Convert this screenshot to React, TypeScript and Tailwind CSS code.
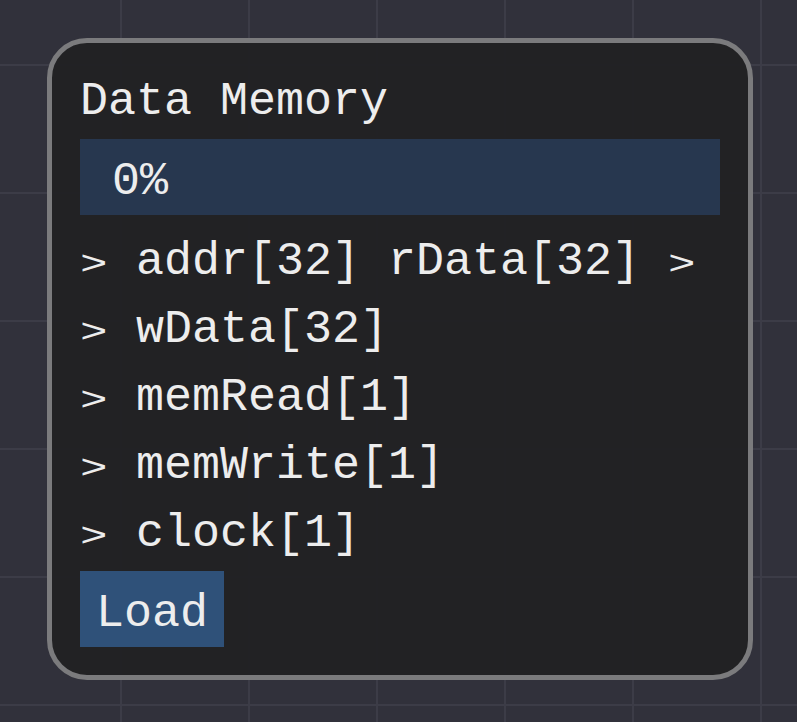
import React from 'react';

const pins = [
  { label: 'addr[32]', out: 'rData[32]' },
  { label: 'wData[32]' },
  { label: 'memRead[1]' },
  { label: 'memWrite[1]' },
  { label: 'clock[1]' },
];

const Line: React.FC<{ children: React.ReactNode }> = ({ children }) => (
  <div className="h-[52px] leading-[62px] whitespace-pre">{children}</div>
);

// small pin arrow, like the pixel font's ">"
const Arrow = () => (
  <span className="inline-block w-[28px] origin-left scale-x-[1.35] text-[34px]">&gt;</span>
);

export default function App() {
  const progress = 0;

  return (
    <div className="h-[722px] w-full overflow-hidden bg-[#31313b] bg-[linear-gradient(to_right,#3c3c47_2px,transparent_2px),linear-gradient(to_bottom,#3c3c47_2px,transparent_2px)] bg-[size:128px_128px] bg-[position:120px_64px] pl-[47px] pt-[38px] font-['Liberation_Mono',monospace] text-[46.67px] text-[#ededed]">
      {/* Node */}
      <div className="flex h-[642px] w-[706px] flex-col gap-[16px] rounded-[40px] border-[5px] border-[#7b7b7d] bg-[rgba(33,33,35,0.94)] px-[28px] pt-[28px]">
        <Line>Data Memory</Line>

        {/* progress bar */}
        <div className="relative h-[76px] w-full bg-[#27374f]">
          <div className="h-full bg-[#3a5a85]" style={{ width: `${progress}%` }} />
          <div className="absolute left-[32px] top-[12px]">
            <Line>{progress}%</Line>
          </div>
        </div>

        {pins.map((p) => (
          <Line key={p.label}>
            <Arrow />
            {' ' + p.label}
            {p.out && (
              <>
                {' ' + p.out + ' '}
                <Arrow />
              </>
            )}
          </Line>
        ))}

        <button className="h-[76px] w-[144px] bg-[#2f5179] px-[16px] text-left text-[#ededed]">
          <Line>Load</Line>
        </button>
      </div>
    </div>
  );
}
